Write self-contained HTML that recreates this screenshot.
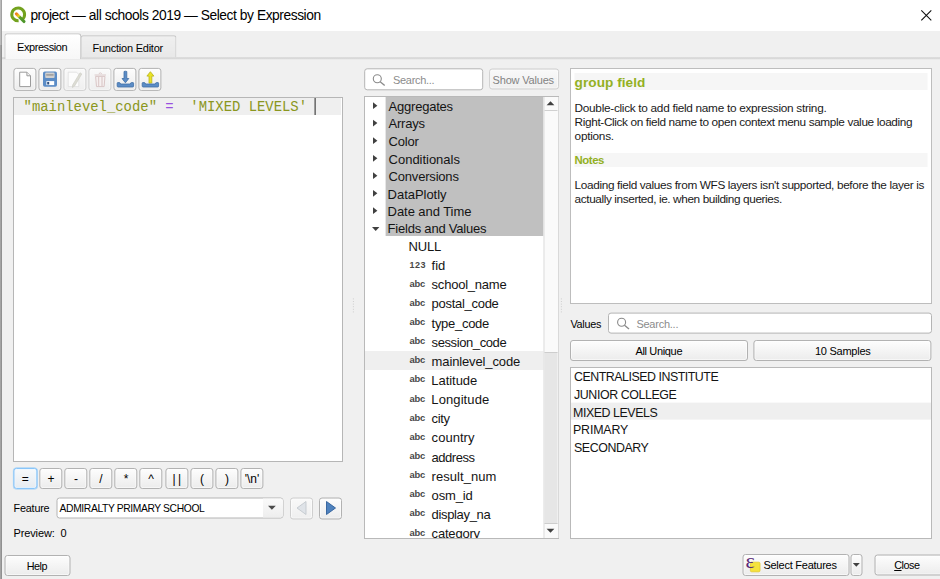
<!DOCTYPE html>
<html>
<head>
<meta charset="utf-8">
<title>Select by Expression</title>
<style>
html,body{margin:0;padding:0;}
body{width:940px;height:579px;overflow:hidden;background:#f0f0f0;position:relative;font-family:"Liberation Sans",sans-serif;color:#000;}
.abs{position:absolute;}
.t{position:absolute;white-space:nowrap;line-height:1;}
.btn{position:absolute;box-sizing:border-box;border:1px solid #b2b2b2;border-radius:3px;background:linear-gradient(#fdfdfd,#ececec);box-shadow:inset 0 0 0 1px rgba(255,255,255,.55);}
.btn.dis{border-color:#cfcfcf;background:linear-gradient(#f9f9f9,#efefef);}
.btn.foc{border-color:#7cc0fb;background:linear-gradient(#f7f9fb,#e6ebf0);box-shadow:0 0 0 .5px rgba(124,192,251,.7),inset 0 0 0 1px rgba(236,246,255,.8);}
.box{position:absolute;box-sizing:border-box;border:1px solid #b9b9b9;background:#fff;}
.inp{position:absolute;box-sizing:border-box;border:1px solid #b4b4b4;border-radius:3px;background:#fff;}
svg{position:absolute;overflow:visible;}
.op{position:absolute;font-size:12px;line-height:1;white-space:nowrap;}

</style>
</head>
<body>
<!-- title bar -->
<div class="abs" style="left:0;top:0;width:940px;height:31px;background:#fff;"></div>
<div class="abs" style="left:0;top:0;width:2px;height:579px;background:linear-gradient(90deg,#c4c4c4,#b0b0b0 60%,#8c8c8c);"></div>
<div class="abs" style="left:0;top:45px;width:2px;height:534px;background:linear-gradient(90deg,#ababab,#9a9a9a 60%,#808080);"></div>
<!-- qgis logo -->
<svg style="transform:translate(0.00px,0.50px);left:9px;top:6px;" width="17" height="17" viewBox="0 0 17 17">
  <defs><linearGradient id="qg" x1="0" y1="0" x2="1" y2="1"><stop offset="0" stop-color="#f07e1a"/><stop offset=".3" stop-color="#e9d522"/><stop offset=".45" stop-color="#5a9e2c"/><stop offset="1" stop-color="#4c962a"/></linearGradient></defs>
  <path d="M13.2 12.9 A6.4 6.4 0 1 0 9.6 14.3" fill="none" stroke="#73a21e" stroke-width="3"/>
  <path d="M7.4 7.4 L15 15" stroke="url(#qg)" stroke-width="3.1" stroke-linecap="round" fill="none"/>
</svg>
<!-- close X -->
<svg style="left:921px;top:10px;" width="11" height="11" viewBox="0 0 11 11"><path d="M0.3 0.3 L10.3 10.3 M10.3 0.3 L0.3 10.3" stroke="#111" stroke-width="1.1" fill="none"/></svg>

<!-- tabs -->
<div class="abs" style="transform:translate(0.00px,0.40px);left:2px;top:57px;width:938px;height:2px;background:linear-gradient(#cdcdcd,#e2e2e2);"></div>
<div class="abs" style="transform:translate(0.50px,0.20px);left:80px;top:35px;width:95.5px;height:22.3px;box-sizing:border-box;border:1px solid #c6c6c6;border-bottom:none;border-radius:2.5px 2.5px 0 0;background:linear-gradient(#efefef,#e8e8e8);"></div>
<div class="abs" style="transform:translate(0.30px,0.30px);left:4px;top:33px;width:76.7px;height:26px;box-sizing:border-box;border:1px solid #c6c6c6;border-bottom:none;border-radius:3px 3px 0 0;background:linear-gradient(#ffffff,#f7f7f7);"></div>

<!-- toolbar buttons -->
<div class="btn" style="transform:translate(0.40px,0.90px);left:13px;top:67px;width:23px;height:23px;"></div>
<div class="btn" style="transform:translate(0.40px,0.90px);left:38px;top:67px;width:23px;height:23px;"></div>
<div class="btn dis" style="transform:translate(0.40px,0.90px);left:63px;top:67px;width:23px;height:23px;"></div>
<div class="btn dis" style="transform:translate(0.40px,0.90px);left:88px;top:67px;width:23px;height:23px;"></div>
<div class="btn" style="transform:translate(0.40px,0.90px);left:113px;top:67px;width:23px;height:23px;"></div>
<div class="btn" style="transform:translate(0.40px,0.90px);left:138px;top:67px;width:23px;height:23px;"></div>
<!-- icon: new -->
<svg style="left:18px;top:70px;" width="14" height="18" viewBox="0 0 14 18"><path d="M1.7 2.2 h7.2 l3.6 3.6 v10.8 h-10.8 z" fill="#fff" stroke="#9b9b9b" stroke-width="1"/><path d="M8.9 2.2 v3.6 h3.6" fill="#f2f2f2" stroke="#9b9b9b" stroke-width="1"/></svg>
<!-- icon: save -->
<svg style="transform:translate(0.00px,0.50px);left:43px;top:71px;" width="14" height="15.5" viewBox="0 0 14 15.5"><rect x="0" y="0" width="14" height="15.3" rx="1.8" fill="#5b8cc6"/><rect x="2.2" y="1" width="9.4" height="5.6" rx="1" fill="#cfcfcf"/><rect x="3.2" y="2.6" width="7.4" height="1.6" fill="#9d9d9d"/><rect x="3.4" y="9.6" width="7.8" height="4" fill="#fff"/><rect x="4.2" y="10.4" width="2" height="2.6" fill="#2f4f7f"/></svg>
<!-- icon: edit (disabled) -->
<svg style="left:67px;top:71px;" width="16" height="17" viewBox="0 0 16 17"><path d="M1.2 1.2 h8.4 l2.2 2.2 v12.2 h-10.6z" fill="#fcfcfc" stroke="#dedede" stroke-width=".8"/><path d="M13 1.8 l1.8 1.1 l-7.2 12.2 l-2.2 1.4 l.2 -2.5z" fill="#dcdcd4" stroke="#cbcbc2" stroke-width=".6"/></svg>
<!-- icon: trash (disabled) -->
<svg style="left:94px;top:72px;" width="13" height="16" viewBox="0 0 13 16"><path d="M0.6 3 h11.4 M4.8 1.6 q1.5 -1.4 3 0" stroke="#dccaca" stroke-width="1" fill="none"/><path d="M1.6 4.4 h9.4 l-.9 10.2 h-7.6z" fill="#f6f1f1" stroke="#d9c6c6" stroke-width="1"/><path d="M4.6 5 v9 M8 5 v9" stroke="#decdcd" stroke-width="1.3"/></svg>
<!-- icon: import (down arrow) -->
<svg style="left:116px;top:70px;" width="19" height="18" viewBox="0 0 19 18"><path d="M8 1.5 q1.4 -.6 2.8 0 v7 h2 l-3.4 4.3 l-3.4 -4.3 h2z" fill="#5b8cc6" stroke="#3f6ea6" stroke-width=".8" stroke-linejoin="round"/><path d="M1.2 13.2 q0 -.6 .6 -.6 h1.4 q1 0 1.4 1.4 h9.6 q.4 -1.4 1.4 -1.4 h1.4 q.6 0 .6 .6 v2.8 q0 1 -1 1 h-14.4 q-1 0 -1 -1z" fill="#5b8cc6" stroke="#3f6ea6" stroke-width=".8"/></svg>
<!-- icon: export (up arrow) -->
<svg style="left:141px;top:70px;" width="19" height="18" viewBox="0 0 19 18"><path d="M9.4 1.7 l3.5 4.4 h-2.1 v7 h-2.8 v-7 h-2.1z" fill="#e9e326" stroke="#b9b31a" stroke-width=".8" stroke-linejoin="round"/><path d="M1.2 13.2 q0 -.6 .6 -.6 h1.4 q1 0 1.4 1.4 h9.6 q.4 -1.4 1.4 -1.4 h1.4 q.6 0 .6 .6 v2.8 q0 1 -1 1 h-14.4 q-1 0 -1 -1z" fill="#5b8cc6" stroke="#3f6ea6" stroke-width=".8"/></svg>

<!-- editor -->
<div class="box" style="left:13px;top:97px;width:330px;height:365px;border-color:#b6b6b6;"></div>
<div class="abs" style="left:14px;top:98px;width:327px;height:17.3px;background:#efefef;"></div>
<div class="t" id="code" style="left:23.6px;top:100.5px;font-family:'Liberation Mono',monospace;font-size:13.9px;color:#8a9620;white-space:pre;">"mainlevel_code" <span style="color:#9a50e0">=</span>  'MIXED LEVELS' </div>
<div class="abs" style="transform:translate(0.60px,0.00px);left:314px;top:98px;width:1px;height:17px;background:#222;"></div>

<!-- operator buttons -->
<div class="btn foc" style="transform:translate(0.40px,0.90px);left:13px;top:467px;width:24px;height:21px;"></div>
<div class="btn" style="transform:translate(0.30px,0.00px);left:39px;top:468px;width:23px;height:21px;"></div>
<div class="btn" style="transform:translate(0.30px,0.00px);left:64px;top:468px;width:23px;height:21px;"></div>
<div class="btn" style="transform:translate(0.30px,0.00px);left:89px;top:468px;width:23px;height:21px;"></div>
<div class="btn" style="transform:translate(0.30px,0.00px);left:114px;top:468px;width:23px;height:21px;"></div>
<div class="btn" style="transform:translate(0.30px,0.00px);left:139px;top:468px;width:23px;height:21px;"></div>
<div class="btn" style="transform:translate(0.40px,0.00px);left:165px;top:468px;width:23px;height:21px;"></div>
<div class="btn" style="transform:translate(0.40px,0.00px);left:190px;top:468px;width:23px;height:21px;"></div>
<div class="btn" style="transform:translate(0.40px,0.00px);left:215px;top:468px;width:23px;height:21px;"></div>
<div class="btn" style="transform:translate(0.40px,0.00px);left:240px;top:468px;width:23px;height:21px;"></div>

<!-- feature combobox + nav -->
<div class="inp" style="transform:translate(0.50px,0.50px);left:56px;top:497px;width:227px;height:20.5px;"></div>
<div class="abs" style="transform:translate(0.00px,0.50px);left:263px;top:498px;width:19.5px;height:18.5px;border-radius:0 2px 2px 0;background:linear-gradient(#fafafa,#eeeeee);"></div>
<svg style="transform:translate(0.00px,0.80px);left:268px;top:505px;" width="9" height="5" viewBox="0 0 9 5"><path d="M0 0 h7.8 l-3.9 4z" fill="#4a4a4a"/></svg>
<div class="btn dis" style="transform:translate(0.00px,0.50px);left:290px;top:497px;width:23px;height:22px;"></div>
<div class="btn" style="transform:translate(0.00px,0.50px);left:319px;top:497px;width:23px;height:22px;"></div>
<svg style="transform:translate(0.00px,0.50px);left:296px;top:500px;" width="11" height="15" viewBox="0 0 11 15"><path d="M10 1 v13 l-9 -6.5z" fill="#dfe3e8" stroke="#c3c8ce" stroke-width=".9" stroke-linejoin="round"/></svg>
<svg style="transform:translate(0.50px,0.50px);left:325px;top:500px;" width="11" height="15" viewBox="0 0 11 15"><path d="M1 1 v13 l9 -6.5z" fill="#4f82be" stroke="#2f5f9a" stroke-width=".9" stroke-linejoin="round"/></svg>

<!-- help button -->
<div class="btn" style="transform:translate(0.50px,0.00px);left:4px;top:555px;width:66px;height:20.5px;"></div>

<!-- middle: search + show values -->
<div class="inp" style="transform:translate(0.20px,0.30px);left:364px;top:68px;width:119px;height:22px;"></div>
<svg style="transform:translate(0.50px,0.20px);left:372px;top:74px;" width="13" height="12" viewBox="0 0 13 12"><circle cx="4.8" cy="4.6" r="4" fill="none" stroke="#8a8a8a" stroke-width="1.1"/><path d="M7.7 7.6 L12.2 11.4" stroke="#8a8a8a" stroke-width="1.3"/></svg>
<div class="btn dis" style="transform:translate(0.10px,0.50px);left:489px;top:68px;width:70px;height:21px;"></div>

<!-- tree -->
<div class="box" style="left:364px;top:96px;width:194.5px;height:442.5px;border-color:#b9b9b9;"></div>
<div class="abs" style="transform:translate(0.60px,0.00px);left:385px;top:97px;width:158px;height:139px;background:#c0c0c0;"></div>
<div class="abs" style="left:365px;top:351px;width:178.5px;height:18.8px;background:#efefef;"></div>
<!-- scrollbar -->
<div class="abs" style="transform:translate(0.50px,0.00px);left:543px;top:97px;width:14.5px;height:440.5px;background:#fafafa;border-left:1px solid #dcdcdc;box-sizing:border-box;"></div>
<div class="abs" style="transform:translate(0.50px,0.00px);left:544px;top:110px;width:13px;height:1px;background:#d0d0d0;"></div>
<div class="abs" style="transform:translate(0.50px,0.00px);left:544px;top:352px;width:13px;height:172px;background:#e6e6e6;border-top:1px solid #cdcdcd;border-bottom:1px solid #cdcdcd;box-sizing:border-box;"></div>
<svg style="transform:translate(0.60px,0.20px);left:546px;top:101px;" width="8" height="4" viewBox="0 0 8 4"><path d="M0 4 h7.8 l-3.9 -3.9z" fill="#404040"/></svg>
<svg style="transform:translate(0.60px,0.80px);left:546px;top:528px;" width="8" height="4" viewBox="0 0 8 4"><path d="M0 0 h7.8 l-3.9 3.9z" fill="#404040"/></svg>
<!-- tree arrows -->
<svg style="transform:translate(0.00px,0.30px);left:373px;top:102px;" width="5" height="7" viewBox="0 0 5 7"><path d="M0 0 v6.8 l4.4 -3.4z" fill="#404040"/></svg>
<svg style="transform:translate(0.00px,0.70px);left:373px;top:119px;" width="5" height="7" viewBox="0 0 5 7"><path d="M0 0 v6.8 l4.4 -3.4z" fill="#404040"/></svg>
<svg style="transform:translate(0.00px,0.30px);left:373px;top:137px;" width="5" height="7" viewBox="0 0 5 7"><path d="M0 0 v6.8 l4.4 -3.4z" fill="#404040"/></svg>
<svg style="transform:translate(0.00px,0.90px);left:373px;top:154px;" width="5" height="7" viewBox="0 0 5 7"><path d="M0 0 v6.8 l4.4 -3.4z" fill="#404040"/></svg>
<svg style="transform:translate(0.00px,0.30px);left:373px;top:172px;" width="5" height="7" viewBox="0 0 5 7"><path d="M0 0 v6.8 l4.4 -3.4z" fill="#404040"/></svg>
<svg style="transform:translate(0.00px,0.90px);left:373px;top:189px;" width="5" height="7" viewBox="0 0 5 7"><path d="M0 0 v6.8 l4.4 -3.4z" fill="#404040"/></svg>
<svg style="transform:translate(0.00px,0.30px);left:373px;top:207px;" width="5" height="7" viewBox="0 0 5 7"><path d="M0 0 v6.8 l4.4 -3.4z" fill="#404040"/></svg>
<svg style="left:372px;top:227px;" width="8" height="4" viewBox="0 0 8 4"><path d="M0 0 h7.4 l-3.7 4z" fill="#404040"/></svg>

<!-- right: help pane -->
<div class="box" style="left:570px;top:68px;width:362px;height:235.5px;border-color:#bdbdbd;"></div>
<div class="abs" style="transform:translate(0.50px,0.00px);left:574px;top:73px;width:353px;height:17px;background:#f6f6f6;"></div>
<div class="abs" style="transform:translate(0.50px,0.00px);left:574px;top:153px;width:353px;height:14px;background:#f6f6f6;"></div>
<!-- values search -->
<div class="inp" style="transform:translate(0.00px,0.60px);left:608px;top:312px;width:324px;height:21px;"></div>
<svg style="transform:translate(0.80px,0.60px);left:616px;top:317px;" width="13" height="12" viewBox="0 0 13 12"><circle cx="4.8" cy="4.6" r="4" fill="none" stroke="#8a8a8a" stroke-width="1.1"/><path d="M7.7 7.6 L12.2 11.4" stroke="#8a8a8a" stroke-width="1.3"/></svg>
<div class="btn" style="left:570px;top:340px;width:178px;height:21px;"></div>
<div class="btn" style="transform:translate(0.40px,0.00px);left:753px;top:340px;width:178px;height:21px;"></div>
<!-- values list -->
<div class="box" style="left:570px;top:367px;width:362px;height:171.5px;border-color:#b9b9b9;"></div>
<div class="abs" style="transform:translate(0.00px,0.60px);left:571px;top:402px;width:360px;height:17.2px;background:#efefef;"></div>

<!-- bottom buttons -->
<div class="btn" style="transform:translate(0.50px,0.00px);left:742px;top:554px;width:107px;height:21.5px;"></div>
<div class="btn" style="transform:translate(0.50px,0.00px);left:850px;top:554px;width:11.5px;height:21.5px;"></div>
<svg style="transform:translate(0.80px,0.00px);left:852px;top:563px;" width="8" height="4" viewBox="0 0 8 4"><path d="M0 0 h7 l-3.5 3.8z" fill="#404040"/></svg>
<div class="btn" style="transform:translate(0.50px,0.50px);left:874px;top:554px;width:80px;height:21px;"></div>
<!-- select-features icon -->
<svg style="left:746px;top:556px;" width="15" height="17" viewBox="0 0 15 17"><rect x="4.4" y="6.2" width="9.6" height="9.6" rx="1.2" fill="#f5e23c" stroke="#e3c92a" stroke-width=".8"/><text x="-0.6" y="11.6" font-family="Liberation Serif,serif" font-size="22" fill="#5a2a78">ε</text></svg>
<!-- operator labels -->
<div class="op" style="left:13.3px;top:473.4px;width:24px;text-align:center;">=</div>
<div class="op" style="left:39px;top:473.4px;width:24px;text-align:center;">+</div>
<div class="op" style="left:64px;top:473.4px;width:24px;text-align:center;">-</div>
<div class="op" style="left:89px;top:473.4px;width:24px;text-align:center;">/</div>
<div class="op" style="left:114px;top:473.4px;width:24px;text-align:center;">*</div>
<div class="op" style="left:139px;top:473.4px;width:24px;text-align:center;">^</div>
<div class="op" style="left:165px;top:473.4px;width:24px;text-align:center;letter-spacing:2.5px;text-indent:2px;">||</div>
<div class="op" style="left:190px;top:473.4px;width:24px;text-align:center;">(</div>
<div class="op" style="left:215px;top:473.4px;width:24px;text-align:center;">)</div>
<div class="op" style="left:240px;top:473.4px;width:24px;text-align:center;">'\n'</div>
<!-- splitter handles -->
<div class="abs" style="transform:translate(0.90px,0.40px);left:352px;top:298px;width:1px;height:1px;background:#cfcfcf;"></div>
<div class="abs" style="transform:translate(0.90px,0.00px);left:352px;top:301px;width:1px;height:1px;background:#cfcfcf;"></div>
<div class="abs" style="transform:translate(0.90px,0.60px);left:352px;top:303px;width:1px;height:1px;background:#cfcfcf;"></div>
<div class="abs" style="transform:translate(0.90px,0.20px);left:352px;top:306px;width:1px;height:1px;background:#cfcfcf;"></div>
<div class="abs" style="transform:translate(0.90px,0.80px);left:352px;top:308px;width:1px;height:1px;background:#cfcfcf;"></div>
<div class="abs" style="transform:translate(0.90px,0.40px);left:352px;top:311px;width:1px;height:1px;background:#cfcfcf;"></div>
<div class="abs" style="transform:translate(0.90px,0.40px);left:560px;top:298px;width:1px;height:1px;background:#cfcfcf;"></div>
<div class="abs" style="transform:translate(0.90px,0.00px);left:560px;top:301px;width:1px;height:1px;background:#cfcfcf;"></div>
<div class="abs" style="transform:translate(0.90px,0.60px);left:560px;top:303px;width:1px;height:1px;background:#cfcfcf;"></div>
<div class="abs" style="transform:translate(0.90px,0.20px);left:560px;top:306px;width:1px;height:1px;background:#cfcfcf;"></div>
<div class="abs" style="transform:translate(0.90px,0.80px);left:560px;top:308px;width:1px;height:1px;background:#cfcfcf;"></div>
<div class="abs" style="transform:translate(0.90px,0.40px);left:560px;top:311px;width:1px;height:1px;background:#cfcfcf;"></div>

<!-- text labels -->
<div class="t" style="left:30.40px;top:9.00px;font-size:13.8px;letter-spacing:-0.445px;">project — all schools 2019 — Select by Expression</div>
<div class="t" style="left:17.00px;top:42.00px;font-size:11px;letter-spacing:-0.433px;">Expression</div>
<div class="t" style="left:92.40px;top:43.00px;font-size:11px;letter-spacing:-0.223px;">Function Editor</div>
<div class="t" style="left:13.60px;top:503.00px;font-size:10.8px;letter-spacing:-0.201px;">Feature</div>
<div class="t" style="left:59.60px;top:504.00px;font-size:10.3px;letter-spacing:-0.373px;">ADMIRALTY PRIMARY SCHOOL</div>
<div class="t" style="left:13.60px;top:528.00px;font-size:11px;letter-spacing:-0.149px;white-space:pre;">Preview:  0</div>
<div class="t" style="left:26.80px;top:561.00px;font-size:10.8px;letter-spacing:-0.500px;">Help</div>
<div class="t" style="left:393.00px;top:75.00px;font-size:11px;letter-spacing:-0.296px;color:#8c8c8c;">Search...</div>
<div class="t" style="left:492.60px;top:75.00px;font-size:11px;letter-spacing:-0.189px;color:#838383;">Show Values</div>
<div class="t" style="left:388.60px;top:100.00px;font-size:13px;letter-spacing:-0.221px;color:#141414;">Aggregates</div>
<div class="t" style="left:388.60px;top:117.00px;font-size:13px;letter-spacing:-0.252px;color:#141414;">Arrays</div>
<div class="t" style="left:388.60px;top:135.00px;font-size:13px;letter-spacing:-0.184px;color:#141414;">Color</div>
<div class="t" style="left:388.60px;top:153.00px;font-size:13px;letter-spacing:-0.022px;color:#141414;">Conditionals</div>
<div class="t" style="left:388.60px;top:170.00px;font-size:13px;letter-spacing:-0.196px;color:#141414;">Conversions</div>
<div class="t" style="left:387.60px;top:188.00px;font-size:13px;letter-spacing:-0.039px;color:#141414;">DataPlotly</div>
<div class="t" style="left:387.60px;top:205.00px;font-size:13px;letter-spacing:-0.062px;color:#141414;">Date and Time</div>
<div class="t" style="left:387.60px;top:222.00px;font-size:13px;letter-spacing:-0.217px;color:#141414;">Fields and Values</div>
<div class="t" style="left:408.60px;top:240.00px;font-size:13px;letter-spacing:-0.202px;color:#141414;">NULL</div>
<div class="t" style="left:431.60px;top:259.00px;font-size:13px;letter-spacing:-0.050px;color:#141414;">fid</div>
<div class="t" style="left:409.60px;top:261.00px;font-size:9px;letter-spacing:0.395px;font-weight:700;color:#484848;">123</div>
<div class="t" style="left:431.60px;top:278.00px;font-size:13px;letter-spacing:-0.230px;color:#141414;">school_name</div>
<div class="t" style="left:409.60px;top:279.00px;font-size:9.4px;letter-spacing:-0.270px;font-weight:700;color:#484848;">abc</div>
<div class="t" style="left:431.60px;top:297.00px;font-size:13px;letter-spacing:-0.288px;color:#141414;">postal_code</div>
<div class="t" style="left:409.60px;top:298.00px;font-size:9.4px;letter-spacing:-0.270px;font-weight:700;color:#484848;">abc</div>
<div class="t" style="left:431.60px;top:317.00px;font-size:13px;letter-spacing:-0.295px;color:#141414;">type_code</div>
<div class="t" style="left:409.60px;top:317.00px;font-size:9.4px;letter-spacing:-0.270px;font-weight:700;color:#484848;">abc</div>
<div class="t" style="left:431.60px;top:336.00px;font-size:13px;letter-spacing:-0.406px;color:#141414;">session_code</div>
<div class="t" style="left:409.60px;top:336.00px;font-size:9.4px;letter-spacing:-0.270px;font-weight:700;color:#484848;">abc</div>
<div class="t" style="left:431.60px;top:355.00px;font-size:13px;letter-spacing:-0.131px;color:#141414;">mainlevel_code</div>
<div class="t" style="left:409.60px;top:355.00px;font-size:9.4px;letter-spacing:-0.270px;font-weight:700;color:#484848;">abc</div>
<div class="t" style="left:431.30px;top:374.00px;font-size:13px;letter-spacing:-0.047px;color:#141414;">Latitude</div>
<div class="t" style="left:409.60px;top:374.00px;font-size:9.4px;letter-spacing:-0.270px;font-weight:700;color:#484848;">abc</div>
<div class="t" style="left:431.30px;top:393.00px;font-size:13px;letter-spacing:0.103px;color:#141414;">Longitude</div>
<div class="t" style="left:409.60px;top:394.00px;font-size:9.4px;letter-spacing:-0.270px;font-weight:700;color:#484848;">abc</div>
<div class="t" style="left:431.60px;top:412.00px;font-size:13px;letter-spacing:-0.333px;color:#141414;">city</div>
<div class="t" style="left:409.60px;top:413.00px;font-size:9.4px;letter-spacing:-0.270px;font-weight:700;color:#484848;">abc</div>
<div class="t" style="left:431.60px;top:431.00px;font-size:13px;letter-spacing:0.045px;color:#141414;">country</div>
<div class="t" style="left:409.60px;top:432.00px;font-size:9.4px;letter-spacing:-0.270px;font-weight:700;color:#484848;">abc</div>
<div class="t" style="left:431.60px;top:451.00px;font-size:13px;letter-spacing:-0.492px;color:#141414;">address</div>
<div class="t" style="left:409.60px;top:451.00px;font-size:9.4px;letter-spacing:-0.270px;font-weight:700;color:#484848;">abc</div>
<div class="t" style="left:431.60px;top:470.00px;font-size:13px;letter-spacing:0.047px;color:#141414;">result_num</div>
<div class="t" style="left:409.60px;top:470.00px;font-size:9.4px;letter-spacing:-0.270px;font-weight:700;color:#484848;">abc</div>
<div class="t" style="left:431.60px;top:489.00px;font-size:13px;letter-spacing:-0.175px;color:#141414;">osm_id</div>
<div class="t" style="left:409.60px;top:489.00px;font-size:9.4px;letter-spacing:-0.270px;font-weight:700;color:#484848;">abc</div>
<div class="t" style="left:431.60px;top:508.00px;font-size:13px;letter-spacing:-0.347px;color:#141414;">display_na</div>
<div class="t" style="left:409.60px;top:508.00px;font-size:9.4px;letter-spacing:-0.270px;font-weight:700;color:#484848;">abc</div>
<div class="t" style="left:431.60px;top:527.00px;font-size:13px;letter-spacing:-0.194px;color:#141414;">category</div>
<div class="t" style="left:409.60px;top:528.00px;font-size:9.4px;letter-spacing:-0.270px;font-weight:700;color:#484848;">abc</div>
<div class="t" style="left:574.60px;top:76.00px;font-size:13.6px;letter-spacing:0.048px;font-weight:700;color:#93b023;">group field</div>
<div class="t" style="left:574.60px;top:103.00px;font-size:11.8px;letter-spacing:-0.290px;color:#1a1a1a;">Double-click to add field name to expression string.</div>
<div class="t" style="left:574.60px;top:117.00px;font-size:11.8px;letter-spacing:-0.364px;color:#1a1a1a;">Right-Click on field name to open context menu sample value loading</div>
<div class="t" style="left:574.60px;top:131.00px;font-size:11.8px;letter-spacing:-0.263px;color:#1a1a1a;">options.</div>
<div class="t" style="left:574.60px;top:155.00px;font-size:11.4px;letter-spacing:-0.478px;font-weight:700;color:#93b023;">Notes</div>
<div class="t" style="left:574.60px;top:180.00px;font-size:11.8px;letter-spacing:-0.356px;color:#1a1a1a;">Loading field values from WFS layers isn't supported, before the layer is</div>
<div class="t" style="left:574.60px;top:194.00px;font-size:11.8px;letter-spacing:-0.392px;color:#1a1a1a;">actually inserted, ie. when building queries.</div>
<div class="t" style="left:570.40px;top:319.00px;font-size:10.8px;letter-spacing:-0.243px;">Values</div>
<div class="t" style="left:636.40px;top:319.00px;font-size:11px;letter-spacing:-0.246px;color:#8c8c8c;">Search...</div>
<div class="t" style="left:635.40px;top:346.00px;font-size:11px;letter-spacing:-0.336px;">All Unique</div>
<div class="t" style="left:814.90px;top:346.00px;font-size:11px;letter-spacing:-0.243px;">10 Samples</div>
<div class="t" style="left:574.00px;top:371.00px;font-size:12.4px;letter-spacing:-0.477px;color:#141414;">CENTRALISED INSTITUTE</div>
<div class="t" style="left:574.00px;top:389.00px;font-size:12.4px;letter-spacing:-0.403px;color:#141414;">JUNIOR COLLEGE</div>
<div class="t" style="left:573.00px;top:407.00px;font-size:12.4px;letter-spacing:-0.442px;color:#141414;">MIXED LEVELS</div>
<div class="t" style="left:573.00px;top:424.00px;font-size:12.4px;letter-spacing:-0.161px;color:#141414;">PRIMARY</div>
<div class="t" style="left:574.00px;top:442.00px;font-size:12.4px;letter-spacing:-0.425px;color:#141414;">SECONDARY</div>
<div class="t" style="left:763.40px;top:560.00px;font-size:11px;letter-spacing:-0.246px;">Select Features</div>
<div class="t" style="left:894.20px;top:560.00px;font-size:10.8px;letter-spacing:-0.450px;"><u>C</u>lose</div>
<!-- clip overflow below tree -->
<div class="abs" style="left:364px;top:537.5px;width:194.5px;height:12px;background:#f0f0f0;border-top:1px solid #b9b9b9;box-sizing:border-box;"></div>
</body>
</html>
